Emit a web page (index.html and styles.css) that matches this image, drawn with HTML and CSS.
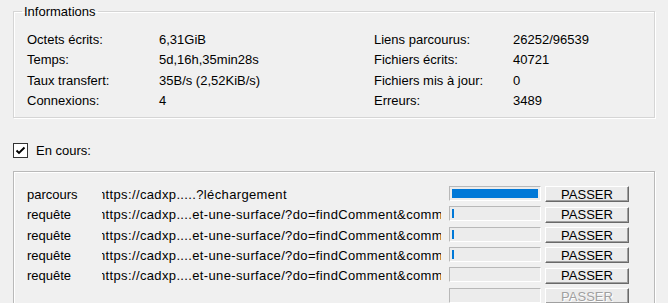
FILE: index.html
```html
<!DOCTYPE html>
<html lang="fr">
<head>
  <meta charset="UTF-8" />
  <title>Progression</title>
  <link rel="stylesheet" href="styles.css">
</head>
<body>
  <div class="page">

    <!-- Informations -->
    <fieldset class="info">
      <legend>Informations</legend>
      <div class="stats">
        <span>Octets écrits:</span><span>6,31GiB</span>
        <span>Liens parcourus:</span><span>26252/96539</span>
        <span>Temps:</span><span>5d,16h,35min28s</span>
        <span>Fichiers écrits:</span><span>40721</span>
        <span>Taux transfert:</span><span>35B/s (2,52KiB/s)</span>
        <span>Fichiers mis à jour:</span><span>0</span>
        <span>Connexions:</span><span>4</span>
        <span>Erreurs:</span><span>3489</span>
      </div>
    </fieldset>

    <!-- En cours -->
    <label class="check-row">
      <span class="checkbox">
        <svg width="13" height="13" viewBox="0 0 13 13"><polyline points="2.5,6.5 5,9 10.5,3.5" fill="none" stroke="#000" stroke-width="1.9"/></svg>
      </span>
      <span>En cours:</span>
    </label>

    <div class="panel">
      <div class="job">
        <span class="kind">parcours</span>
        <span class="url">https://cadxp.....?léchargement</span>
        <span class="bar"><span class="fill" style="width:100%"></span></span>
        <button class="skip">PASSER</button>
      </div>
      <div class="job">
        <span class="kind">requête</span>
        <span class="url">https://cadxp....et-une-surface/?do=findComment&amp;comment=1234567</span>
        <span class="bar"><span class="fill" style="width:2px"></span></span>
        <button class="skip">PASSER</button>
      </div>
      <div class="job">
        <span class="kind">requête</span>
        <span class="url">https://cadxp....et-une-surface/?do=findComment&amp;comment=1234568</span>
        <span class="bar"><span class="fill" style="width:2px"></span></span>
        <button class="skip">PASSER</button>
      </div>
      <div class="job">
        <span class="kind">requête</span>
        <span class="url">https://cadxp....et-une-surface/?do=findComment&amp;comment=1234569</span>
        <span class="bar"><span class="fill" style="width:2px"></span></span>
        <button class="skip">PASSER</button>
      </div>
      <div class="job">
        <span class="kind">requête</span>
        <span class="url">https://cadxp....et-une-surface/?do=findComment&amp;comment=1234570</span>
        <span class="bar"></span>
        <button class="skip">PASSER</button>
      </div>
      <div class="job">
        <span class="kind"></span>
        <span class="url"></span>
        <span class="bar"></span>
        <button class="skip" disabled>PASSER</button>
      </div>
    </div>

  </div>
</body>
</html>
```

FILE: styles.css
```css
/* Base */
body {
  margin: 0;
  background: #f0f0f0;
  color: #000;
  font-family: "Liberation Sans", Arial, sans-serif;
  font-size: 13px;
  overflow: hidden;
}

.page {
  padding: 4px 13px 0 13px;
  width: 642px;
}

/* Group box */
.info {
  margin: 0;
  padding: 0;
  border: 1px solid #d5d5d5;
  box-shadow: 1px 1px 0 #fff, inset 1px 1px 0 #fff;
}

.info legend {
  margin-left: 8px;
  padding: 0 2px;
  line-height: 15px;
}

.stats {
  display: grid;
  grid-template-columns: 132px 215px 139px 1fr;
  grid-auto-rows: 20.33px;
  line-height: 20.33px;
  padding: 11px 0 6px 13px;
  white-space: nowrap;
}

/* Checkbox */
.check-row {
  display: flex;
  align-items: center;
  gap: 8px;
  margin: 25px 0 0 0;
  height: 15px;
  line-height: 15px;
}

.checkbox {
  width: 13px;
  height: 13px;
  border: 1px solid #333;
  background: #fff;
  display: flex;
}

/* Running jobs */
.panel {
  margin-top: 13px;
  height: 140px;
  border: 1px solid #b9b9b9;
  box-shadow: 1px 1px 0 #fff, inset 1px 1px 0 #fff;
  padding: 12px 0 0 13px;
}

.job {
  display: grid;
  grid-template-columns: 75px 339px 92px 84px;
  height: 20.33px;
  align-items: center;
  white-space: nowrap;
}

.kind {
  line-height: 15px;
}

.url {
  overflow: hidden;
  text-indent: -4px;
  letter-spacing: 0.36px;
  line-height: 15px;
  height: 15px;
}

.bar {
  box-sizing: border-box;
  margin-left: 8px;
  width: 92px;
  height: 15px;
  padding: 2px;
  border: 1px solid;
  border-color: #b8b8b8 #fff #fff #b8b8b8;
  background: #ececec;
  margin-top: -2px;
}

.bar .fill {
  display: block;
  height: 100%;
  background: #0078d7;
}

.skip {
  box-sizing: border-box;
  margin: 0 0 0 12px;
  width: 84px;
  height: 16px;
  padding: 0;
  font-family: inherit;
  font-size: 13px;
  line-height: 13px;
  color: #000;
  background: #ebebeb;
  border: 1px solid;
  border-color: #fff #696969 #696969 #fff;
  box-shadow: inset -1px -1px 0 #a0a0a0;
  border-radius: 0;
}

.skip:disabled {
  color: #a0a0a0;
  text-shadow: 1px 1px 0 #fff;
}
```
